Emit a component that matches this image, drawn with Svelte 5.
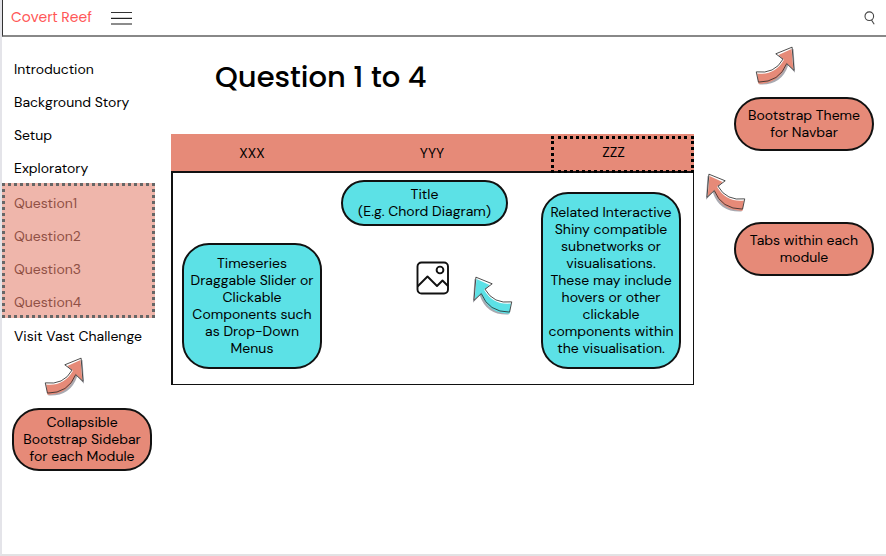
<script>
  const modules = ['Introduction', 'Background Story', 'Setup', 'Exploratory'];
  const questions = ['Question1', 'Question2', 'Question3', 'Question4'];
  const tabs = ['XXX', 'YYY', 'ZZZ'];
  let active = $state('ZZZ');
  let open = $state(true);
</script>

{#snippet arrow(color, flipped)}
  <svg class="arrow" class:flipped viewBox="0 0 42 42" aria-hidden="true">
    <path d="M3 29 Q22 30 30 16 L24 10 L39.5 3 L41 27.5 L34 20 Q27 40.5 4.5 39.5 Z" fill="#a9a9b0" />
    <path d="M1.3 26.5 Q20 29 28.7 13.5 L21.3 8 L38 1.2 L40 25 L32.5 18 Q25 38 3.5 38 Z" fill="#fff" />
    <path d="M2.2 28.2 Q20.5 30 29.7 14 L24 9.3 L37.4 3 L39.3 24 L32.8 18 Q25 39 3.5 38.6 Z" fill={color} />
    <path d="M1.3 26.5 Q20 29 28.7 13.5 L21.3 8 L38 1.2 L40 25 L32.5 18 Q25 37 3.5 37 Z" fill="none" stroke="#2a2a2a" stroke-width="0.85" />
  </svg>
{/snippet}

<div class="page">
  <header>
    <a class="brand" href="#home">Covert Reef</a>
    <button class="icon menu" aria-label="Toggle sidebar" aria-expanded={open} onclick={() => (open = !open)}>
      <svg width="21" height="14" viewBox="0 0 21 14">
        <path d="M0 1.5H21" stroke="#333" />
        <path d="M0 6.5H21" stroke="#ccc" />
        <path d="M0 7.5H21" stroke="#222" />
        <path d="M0 13H21" stroke="#8c8c8c" stroke-width="2" />
      </svg>
    </button>
    <button class="icon search" aria-label="Search">
      <svg width="12" height="14" viewBox="0 0 12 14" fill="none" stroke="#444" stroke-width="1.1">
        <circle cx="5.3" cy="5.2" r="4.3" />
        <path d="M7.5 9 L10.2 13.2" />
      </svg>
    </button>
  </header>

  <div class="body">
    <aside>
      {#if open}
        <nav>
          {#each modules as item}<a href="#{item}">{item}</a>{/each}
          <div class="group">
            {#each questions as item}<a href="#{item}">{item}</a>{/each}
          </div>
          <a href="#vast">Visit Vast Challenge</a>
        </nav>
      {/if}
      <div class="side-arrow">{@render arrow('#e68a78', false)}</div>
      <p class="pill">Collapsible<br />Bootstrap Sidebar<br />for each Module</p>
    </aside>

    <main>
      <h1>Question 1 to 4</h1>
      <div class="tabs" role="tablist">
        {#each tabs as tab}
          <button role="tab" aria-selected={active === tab} class:active={active === tab} onclick={() => (active = tab)}>{tab}</button>
        {/each}
      </div>
      <section class="panel">
        <p class="pill cyan">Timeseries<br />Draggable Slider or<br />Clickable<br />Components such<br />as Drop-Down<br />Menus</p>
        <div class="center">
          <p class="pill cyan title">Title<br />(E.g. Chord Diagram)</p>
          <div class="figure">
            <svg class="image" width="34" height="34" viewBox="0 0 34 34" fill="none" stroke="#111" stroke-width="1.9" stroke-linejoin="round">
              <rect x="1.5" y="1.5" width="30.5" height="31" rx="4" />
              <circle cx="24" cy="9" r="3.4" />
              <path d="M1.5 25.5 L11.5 15.5 L21 25 L26.5 19.5 L32 25" />
            </svg>
            <div class="figure-arrow">{@render arrow('#5ce1e6', true)}</div>
          </div>
        </div>
        <p class="pill cyan tall">Related Interactive<br />Shiny compatible<br />subnetworks or<br />visualisations.<br />These may include<br />hovers or other<br />clickable<br />components within<br />the visualisation.</p>
      </section>
    </main>

    <div class="notes">
      <div class="theme-arrow">{@render arrow('#e68a78', false)}</div>
      <p class="pill">Bootstrap Theme<br />for Navbar</p>
      <div class="tab-arrow">{@render arrow('#e68a78', true)}</div>
      <p class="pill">Tabs within each<br />module</p>
    </div>
  </div>
</div>

<style>
  :global(body) { background: #fff; }
  .page {
    box-sizing: border-box;
    min-height: 100vh;
    border-left: 2px solid #e4e4e9;
    border-bottom: 2px solid #e2e2e4;
    font: 14px/17px "DM Sans", Inter, sans-serif;
    color: #000;
  }
  a { color: inherit; text-decoration: none; }
  p, h1 { margin: 0; }
  svg { display: block; }
  header {
    box-sizing: border-box;
    display: flex;
    align-items: center;
    height: 37px;
    padding: 0 10px 0 8px;
    border-left: 1px solid #333;
    border-bottom: 2px solid #888;
  }
  .brand { font-family: Poppins, Inter, sans-serif; color: #ff5757; }
  .icon { border: 0; background: none; padding: 0; cursor: pointer; }
  .menu { margin-left: 19px; }
  .search { margin-left: auto; }
  .body { display: flex; padding-right: 12px; }
  aside { width: 153px; flex: none; }
  nav { display: flex; flex-direction: column; gap: 16px; padding-top: 24px; }
  nav > a { margin-left: 12px; }
  .group {
    display: flex;
    flex-direction: column;
    gap: 16px;
    margin: -10px 0 -6px;
    padding: 9px 9px 4px;
    border: 3px dotted #666;
    background: #efb6ab;
    color: #905045;
  }
  .arrow { width: 41px; height: 41px; }
  .flipped { transform: scaleX(-1); }
  .side-arrow { padding: 12px 0 10px 42px; }
  .pill {
    box-sizing: border-box;
    width: 140px;
    padding: 8px 0;
    border: 2px solid #111;
    border-radius: 27px;
    background: #e68a78;
    text-align: center;
    white-space: nowrap;
  }
  aside .pill { margin-left: 10px; padding: 4px 0; }
  .cyan { background: #5ce1e6; }
  main { flex: 1; min-width: 0; margin-left: 16px; }
  h1 {
    padding: 22px 0 39px 44px;
    font: 500 29px/36px Poppins, Inter, sans-serif;
  }
  .tabs {
    display: grid;
    grid-template-columns: 180fr 200fr 143fr;
    height: 37px;
    background: #e68a78;
  }
  .tabs button {
    box-sizing: border-box;
    padding: 0 18px 0 0;
    border: 0;
    background: none;
    font: inherit;
    color: inherit;
  }
  .tabs button:nth-child(2) { padding-right: 38px; }
  .tabs .active {
    position: relative;
    height: 37px;
    margin-top: 2px;
    padding-bottom: 4px;
    border: 3px dotted #000;
  }
  .panel {
    display: grid;
    grid-template-columns: 140px 1fr 140px;
    gap: 19px;
    align-items: end;
    padding: 7px 12px 15px 9px;
    border: 2px solid #111;
    border-right-width: 1px;
    border-bottom-width: 1px;
  }
  .panel > .pill { padding: 10px 0; }
  .panel > .tall { margin-top: 12px; }
  .center { align-self: start; }
  .title { width: 167px; padding: 4px 0; }
  .figure { display: flex; padding-top: 35px; }
  .image { margin-left: 75px; }
  .figure-arrow { padding: 15px 0 0 22px; }
  .notes { flex: none; width: 169px; margin-left: 11px; }
  .notes .pill { margin-left: auto; }
  .theme-arrow { padding: 9px 0 10px 50px; }
  .tab-arrow { padding: 22px 0 8px; }
</style>
